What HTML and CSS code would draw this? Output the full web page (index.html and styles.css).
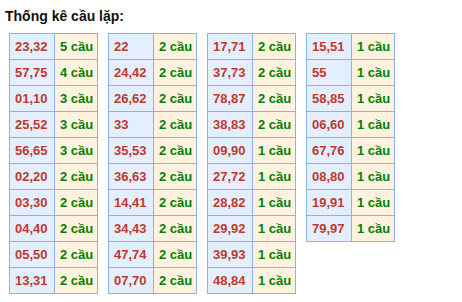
FILE: index.html
```html
<!DOCTYPE html>
<html lang="vi">
<head>
<meta charset="utf-8">
<link rel="stylesheet" href="styles.css">
</head>
<body>
<div class="title">Thống kê cầu lặp:</div>
<div class="tables">
  <table class="tk">
    <tr><td class="n">23,32</td><td class="c">5 cầu</td></tr>
    <tr><td class="n">57,75</td><td class="c">4 cầu</td></tr>
    <tr><td class="n">01,10</td><td class="c">3 cầu</td></tr>
    <tr><td class="n">25,52</td><td class="c">3 cầu</td></tr>
    <tr><td class="n">56,65</td><td class="c">3 cầu</td></tr>
    <tr><td class="n">02,20</td><td class="c">2 cầu</td></tr>
    <tr><td class="n">03,30</td><td class="c">2 cầu</td></tr>
    <tr><td class="n">04,40</td><td class="c">2 cầu</td></tr>
    <tr><td class="n">05,50</td><td class="c">2 cầu</td></tr>
    <tr><td class="n">13,31</td><td class="c">2 cầu</td></tr>
  </table>
  <table class="tk">
    <tr><td class="n">22</td><td class="c">2 cầu</td></tr>
    <tr><td class="n">24,42</td><td class="c">2 cầu</td></tr>
    <tr><td class="n">26,62</td><td class="c">2 cầu</td></tr>
    <tr><td class="n">33</td><td class="c">2 cầu</td></tr>
    <tr><td class="n">35,53</td><td class="c">2 cầu</td></tr>
    <tr><td class="n">36,63</td><td class="c">2 cầu</td></tr>
    <tr><td class="n">14,41</td><td class="c">2 cầu</td></tr>
    <tr><td class="n">34,43</td><td class="c">2 cầu</td></tr>
    <tr><td class="n">47,74</td><td class="c">2 cầu</td></tr>
    <tr><td class="n">07,70</td><td class="c">2 cầu</td></tr>
  </table>
  <table class="tk">
    <tr><td class="n">17,71</td><td class="c">2 cầu</td></tr>
    <tr><td class="n">37,73</td><td class="c">2 cầu</td></tr>
    <tr><td class="n">78,87</td><td class="c">2 cầu</td></tr>
    <tr><td class="n">38,83</td><td class="c">2 cầu</td></tr>
    <tr><td class="n">09,90</td><td class="c">1 cầu</td></tr>
    <tr><td class="n">27,72</td><td class="c">1 cầu</td></tr>
    <tr><td class="n">28,82</td><td class="c">1 cầu</td></tr>
    <tr><td class="n">29,92</td><td class="c">1 cầu</td></tr>
    <tr><td class="n">39,93</td><td class="c">1 cầu</td></tr>
    <tr><td class="n">48,84</td><td class="c">1 cầu</td></tr>
  </table>
  <table class="tk">
    <tr><td class="n">15,51</td><td class="c">1 cầu</td></tr>
    <tr><td class="n">55</td><td class="c">1 cầu</td></tr>
    <tr><td class="n">58,85</td><td class="c">1 cầu</td></tr>
    <tr><td class="n">06,60</td><td class="c">1 cầu</td></tr>
    <tr><td class="n">67,76</td><td class="c">1 cầu</td></tr>
    <tr><td class="n">08,80</td><td class="c">1 cầu</td></tr>
    <tr><td class="n">19,91</td><td class="c">1 cầu</td></tr>
    <tr><td class="n">79,97</td><td class="c">1 cầu</td></tr>
  </table>
</div>
</body>
</html>
```

FILE: styles.css
```css
html, body {
  margin: 0;
  padding: 0;
  background: #ffffff;
}
body {
  font-family: "Liberation Sans", Arial, sans-serif;
}
.title {
  margin: 8px 0 0 5px;
  font-size: 14px;
  line-height: 16px;
  font-weight: bold;
  color: #111111;
}
.tables {
  display: flex;
  align-items: flex-start;
  gap: 10px;
  margin: 9px 0 0 9px;
}
.tk {
  border-collapse: collapse;
  width: 89px;
  table-layout: fixed;
}
.tk td {
  border: 1px solid #8cb0f0;
  height: 25px;
  padding: 0 0 0 5px;
  font-size: 13px;
  font-weight: bold;
  white-space: nowrap;
  vertical-align: middle;
  line-height: 15px;
}
.tk .n {
  background: #e3efff;
  color: #c0392b;
  width: 39px;
}
.tk .c {
  background: #fff3e0;
  color: #008000;
}
```
